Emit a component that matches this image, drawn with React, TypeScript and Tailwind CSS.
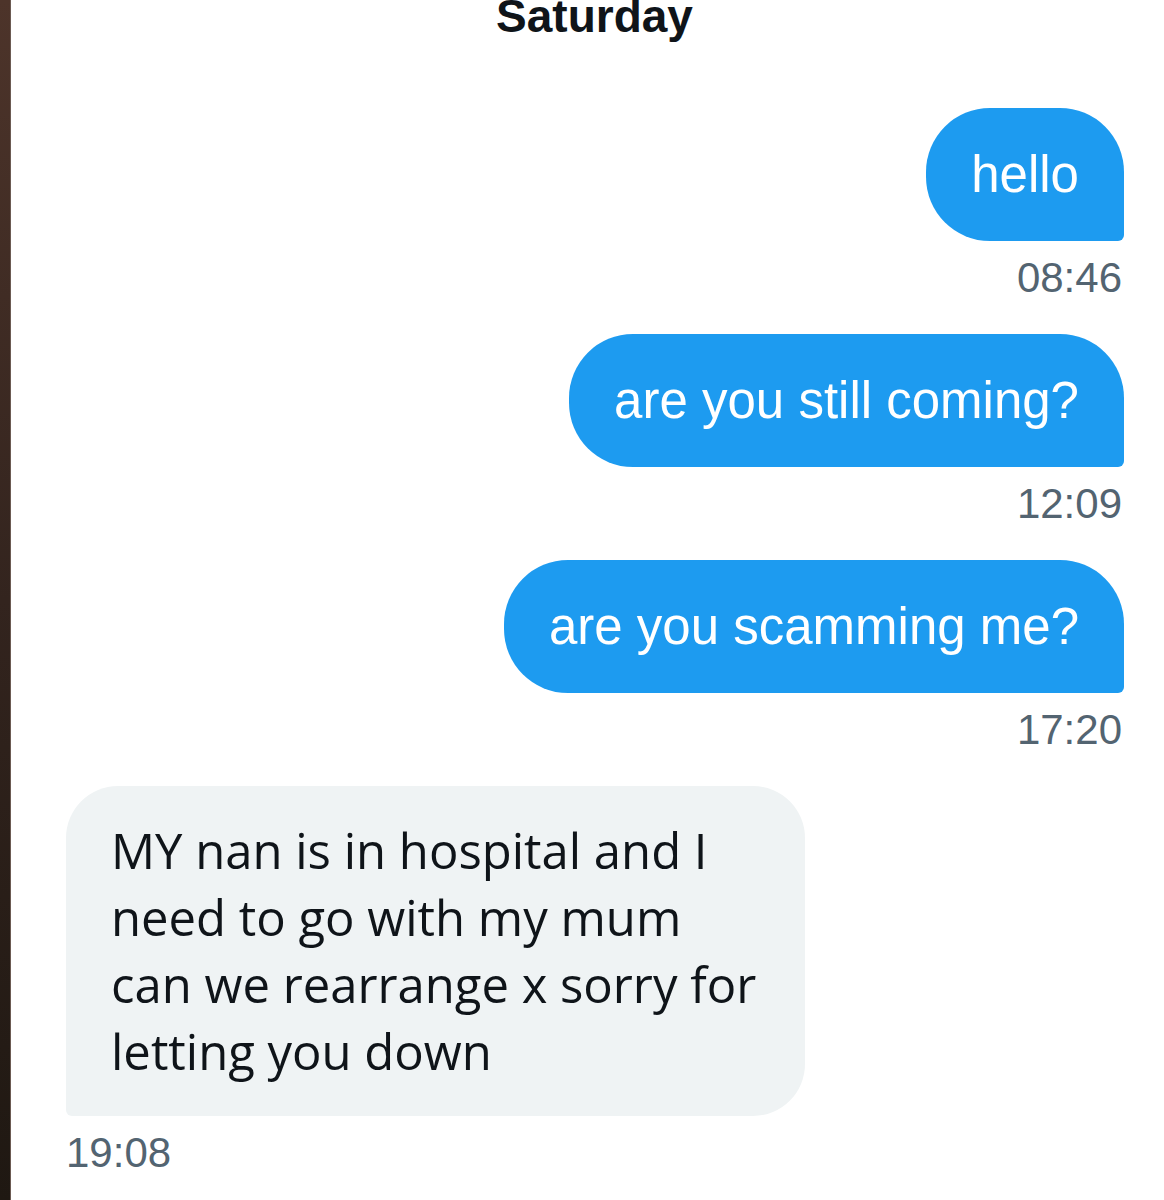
import React from 'react';

const sent = [
  { text: 'hello', time: '08:46' },
  { text: 'are you still coming?', time: '12:09' },
  { text: 'are you scamming me?', time: '17:20' },
];

const received = {
  lines: ['MY nan is in hospital and I', 'need to go with my mum', 'can we rearrange x sorry for', 'letting you down'],
  time: '19:08',
};

const App = () => {
  return (
    <div className="flex h-[1200px] w-[1164px] overflow-hidden bg-white">
      {/* dark edge of the photo */}
      <div className="w-[11px] shrink-0 border-r border-[#6b5a52] bg-gradient-to-b from-[#4d342a] via-[#33241e] to-[#1f1812]" />

      <div className="flex flex-1 flex-col pr-[40px] pl-[55px] font-['Liberation_Sans',Arial,sans-serif]">
        {/* day header */}
        <div className="-mt-[7px] -ml-[55px] flex h-[46px] justify-center pl-[54px]">
          <span className="text-[46px] leading-[46px] font-bold text-[#0f1419]">Saturday</span>
        </div>

        <div className="mt-[69px] flex flex-col">
          {sent.map((m) => (
            <div key={m.time} className="mb-[34px] flex flex-col items-end">
              <div className="flex h-[133px] items-center rounded-[64px] rounded-br-[6px] bg-[#1d9bf0] px-[45px]">
                <span className="whitespace-nowrap text-[51px] leading-[60px] text-white">{m.text}</span>
              </div>
              <div className="mt-[15px] pr-[2px] text-[42px] leading-[44px] text-[#536471]">{m.time}</div>
            </div>
          ))}

          {/* incoming message */}
          <div className="flex flex-col items-start">
            <div className="w-[739px] rounded-[52px] rounded-bl-[6px] bg-[#eff3f4] px-[45px] py-[31px] font-['Open_Sans','Noto_Sans',sans-serif] text-[49px] leading-[67px] text-[#0f1419]">
              {received.lines.map((l) => (
                <div key={l} className="whitespace-nowrap">{l}</div>
              ))}
            </div>
            <div className="mt-[15px] text-[42px] leading-[44px] text-[#536471]">{received.time}</div>
          </div>
        </div>
      </div>
    </div>
  );
};

export default App;
